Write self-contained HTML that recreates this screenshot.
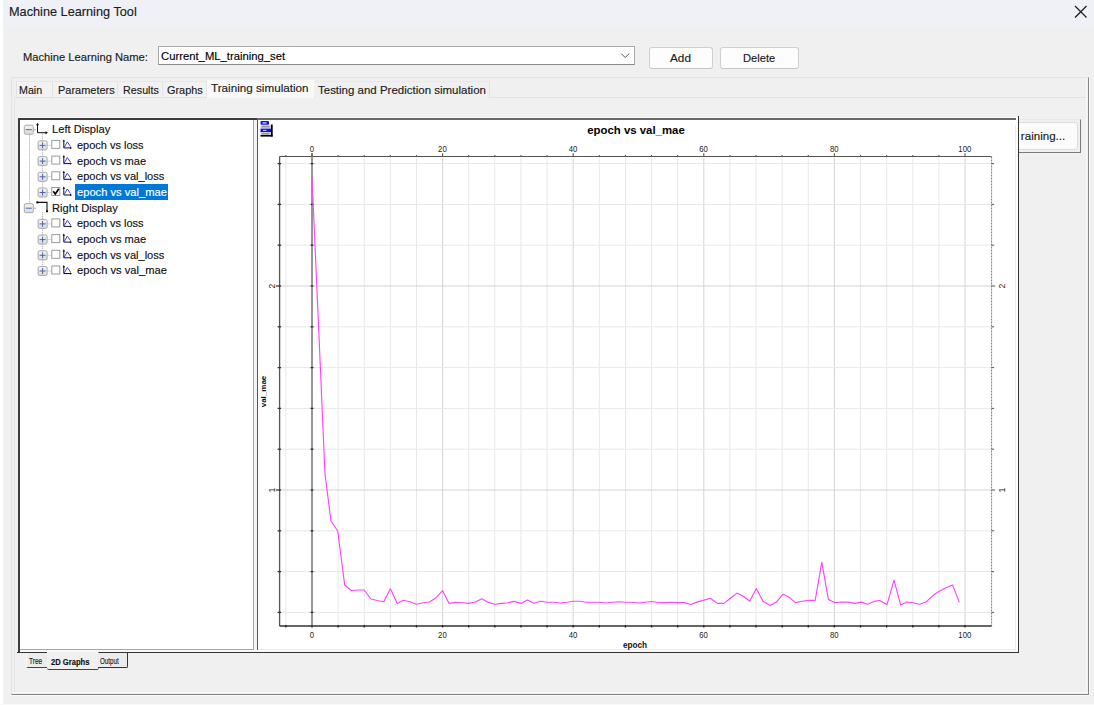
<!DOCTYPE html>
<html><head><meta charset="utf-8"><title>Machine Learning Tool</title>
<style>
html,body{margin:0;padding:0;}
body{width:1094px;height:705px;position:relative;overflow:hidden;background:#f0f0f0;font-family:"Liberation Sans", sans-serif;}
span{-webkit-text-stroke:0.15px currentColor;}
</style></head><body>
<div style="position:absolute;left:0;top:0;width:1094px;height:27px;background:#f0f1f6"></div>
<div style="position:absolute;left:0;top:0;width:3px;height:705px;background:#ffffff"></div>
<span style="position:absolute;left:8.50px;top:5.68px;font-size:12.9px;line-height:12.9px;color:#1b1b1b;font-weight:normal;white-space:nowrap;transform:scaleX(0.9864);transform-origin:0 0;">Machine Learning Tool</span>
<svg style="position:absolute;left:1073px;top:4px" width="16" height="16" viewBox="0 0 16 16"><path d="M2 2 L13.5 13.5 M13.5 2 L2 13.5" stroke="#1f1f1f" stroke-width="1.3" fill="none"/></svg>
<span style="position:absolute;left:23.00px;top:50.80px;font-size:11.7px;line-height:11.7px;color:#1a1a1a;font-weight:normal;white-space:nowrap;transform:scaleX(0.9562);transform-origin:0 0;">Machine Learning Name:</span>
<div style="position:absolute;left:158px;top:46px;width:475px;height:17px;background:#fff;border:1px solid #a9a9a9;border-bottom-color:#8a8a8a"></div>
<span style="position:absolute;left:161.00px;top:49.90px;font-size:11.7px;line-height:11.7px;color:#000;font-weight:normal;white-space:nowrap;transform:scaleX(0.9653);transform-origin:0 0;">Current_ML_training_set</span>
<svg style="position:absolute;left:620px;top:52px" width="11" height="7" viewBox="0 0 11 7"><path d="M1.3 1.6 L5.2 5.6 L9.1 1.6" stroke="#555" stroke-width="1" fill="none"/></svg>
<div style="position:absolute;left:649px;top:47px;width:62px;height:20px;background:#fdfdfd;border:1px solid #d0d0d0;border-bottom-color:#c4c4c4;border-radius:3px"></div>
<span style="position:absolute;left:670.30px;top:52.20px;font-size:11.7px;line-height:11.7px;color:#1a1a1a;font-weight:normal;white-space:nowrap;transform:scaleX(1.0087);transform-origin:0 0;">Add</span>
<div style="position:absolute;left:720px;top:47px;width:77px;height:20px;background:#fdfdfd;border:1px solid #d0d0d0;border-bottom-color:#c4c4c4;border-radius:3px"></div>
<span style="position:absolute;left:742.60px;top:52.20px;font-size:11.7px;line-height:11.7px;color:#1a1a1a;font-weight:normal;white-space:nowrap;transform:scaleX(0.9521);transform-origin:0 0;">Delete</span>
<div style="position:absolute;left:11px;top:77px;width:1078.1px;height:618px;box-sizing:border-box;border-left:1px solid #e2e2e2;border-top:1px solid #e2e2e2;border-right:1.8px solid #858585;border-bottom:1.8px solid #858585"></div>
<div style="position:absolute;left:1086.3px;top:78px;width:1px;height:615px;background:#f8f8f8"></div>
<div style="position:absolute;left:1089.1px;top:77px;width:1px;height:619px;background:#f8f8f8"></div>
<div style="position:absolute;left:12px;top:692.2px;width:1075px;height:1px;background:#f8f8f8"></div>
<div style="position:absolute;left:11px;top:695px;width:1079px;height:1px;background:#f8f8f8"></div>
<div style="position:absolute;left:0;top:704px;width:1094px;height:1px;background:#f9f9f9"></div>
<div style="position:absolute;left:14px;top:97px;width:1072px;height:1px;background:#e2e2e2"></div>
<div style="position:absolute;left:14px;top:97px;width:1px;height:595px;background:#e6e6e6"></div>
<div style="position:absolute;left:16px;top:81px;width:37.3px;height:16px;background:#f2f2f2;border-right:1px solid #e3e3e3;border-top:1px solid #e6e6e6;border-left:1px solid #e3e3e3;box-sizing:border-box"></div>
<span style="position:absolute;left:19.40px;top:83.80px;font-size:11.7px;line-height:11.7px;color:#1a1a1a;font-weight:normal;white-space:nowrap;transform:scaleX(0.9148);transform-origin:0 0;">Main</span>
<div style="position:absolute;left:54px;top:81px;width:64.4px;height:16px;background:#f2f2f2;border-right:1px solid #e3e3e3;border-top:1px solid #e6e6e6;box-sizing:border-box"></div>
<span style="position:absolute;left:57.80px;top:83.80px;font-size:11.7px;line-height:11.7px;color:#1a1a1a;font-weight:normal;white-space:nowrap;transform:scaleX(0.9393);transform-origin:0 0;">Parameters</span>
<div style="position:absolute;left:119px;top:81px;width:43.8px;height:16px;background:#f2f2f2;border-right:1px solid #e3e3e3;border-top:1px solid #e6e6e6;box-sizing:border-box"></div>
<span style="position:absolute;left:122.90px;top:83.80px;font-size:11.7px;line-height:11.7px;color:#1a1a1a;font-weight:normal;white-space:nowrap;transform:scaleX(0.9202);transform-origin:0 0;">Results</span>
<div style="position:absolute;left:163.5px;top:81px;width:43.1px;height:16px;background:#f2f2f2;border-right:1px solid #e3e3e3;border-top:1px solid #e6e6e6;box-sizing:border-box"></div>
<span style="position:absolute;left:167.20px;top:83.80px;font-size:11.7px;line-height:11.7px;color:#1a1a1a;font-weight:normal;white-space:nowrap;transform:scaleX(0.9331);transform-origin:0 0;">Graphs</span>
<div style="position:absolute;left:207px;top:80px;width:107px;height:18px;background:#f9f9f9"></div>
<span style="position:absolute;left:211.30px;top:82.10px;font-size:11.7px;line-height:11.7px;color:#1a1a1a;font-weight:normal;white-space:nowrap;transform:scaleX(0.9994);transform-origin:0 0;">Training simulation</span>
<div style="position:absolute;left:314.5px;top:81px;width:174px;height:16px;background:#f0f0f0;border-top:1px solid #e8e8e8;border-right:1px solid #e3e3e3"></div>
<span style="position:absolute;left:318.30px;top:83.80px;font-size:11.7px;line-height:11.7px;color:#1a1a1a;font-weight:normal;white-space:nowrap;transform:scaleX(0.9828);transform-origin:0 0;">Testing and Prediction simulation</span>
<div style="position:absolute;left:960px;top:119px;width:121.2px;height:33.9px;border-right:1.4px solid #7a7a7a;border-bottom:1.4px solid #7a7a7a;border-top:1px solid #e8e8e8;box-sizing:border-box"></div>
<div style="position:absolute;left:960px;top:121.5px;width:117.5px;height:28px;background:#fbfbfb;border:1px solid #dcdcdc;border-radius:3px;box-sizing:border-box"></div>
<div style="position:absolute;left:1021.2px;top:120px;width:55px;height:30px;overflow:hidden"><div style="position:absolute;left:-1021.2px;top:-120px;width:1094px;height:705px"><span style="position:absolute;left:990.10px;top:130.20px;font-size:11.7px;line-height:11.7px;color:#1a1a1a;font-weight:normal;white-space:nowrap;transform:scaleX(0.9900);transform-origin:0 0;">Start training...</span></div></div>
<div style="position:absolute;left:18px;top:117px;width:1002px;height:1px;background:#fafafa"></div>
<div style="position:absolute;left:18px;top:118px;width:1001px;height:535px;background:#fff"></div>
<div style="position:absolute;left:18px;top:118px;width:239px;height:1.9px;background:#3c3c3c"></div>
<div style="position:absolute;left:257px;top:118px;width:758.6px;height:1.9px;background:#686868"></div>
<div style="position:absolute;left:18px;top:118px;width:2px;height:535px;background:#3c3c3c"></div>
<div style="position:absolute;left:1017.6px;top:116.3px;width:1.7px;height:536.7px;background:#333"></div>
<div style="position:absolute;left:18px;top:651.5px;width:1001.3px;height:1.5px;background:#333"></div>
<div style="position:absolute;left:253px;top:120px;width:1px;height:530px;background:#9ea6b2"></div>
<div style="position:absolute;left:20px;top:649px;width:234px;height:1px;background:#9ea6b2"></div>
<div style="position:absolute;left:254px;top:120px;width:3px;height:530px;background:#f4f4f4"></div>
<div style="position:absolute;left:257px;top:120px;width:1px;height:530px;background:#555"></div>
<div style="position:absolute;left:1015px;top:125px;width:1px;height:525px;background:#ececec"></div>
<div style="position:absolute;left:258px;top:649px;width:758px;height:1px;background:#ececec"></div>
<div style="position:absolute;left:20px;top:650px;width:998px;height:2px;background:#f8f8f8"></div>
<span style="position:absolute;left:52.00px;top:124.15px;font-size:11.4px;line-height:11.4px;color:#111;font-weight:normal;white-space:nowrap;transform:scaleX(0.9788);transform-origin:0 0;">Left Display</span>
<span style="position:absolute;left:77.00px;top:139.85px;font-size:11.4px;line-height:11.4px;color:#111;font-weight:normal;white-space:nowrap;transform:scaleX(0.9643);transform-origin:0 0;">epoch vs loss</span>
<span style="position:absolute;left:77.00px;top:155.55px;font-size:11.4px;line-height:11.4px;color:#111;font-weight:normal;white-space:nowrap;transform:scaleX(0.9750);transform-origin:0 0;">epoch vs mae</span>
<span style="position:absolute;left:77.00px;top:171.25px;font-size:11.4px;line-height:11.4px;color:#111;font-weight:normal;white-space:nowrap;transform:scaleX(0.9713);transform-origin:0 0;">epoch vs val_loss</span>
<div style="position:absolute;left:75.2px;top:184px;width:92.8px;height:15.5px;background:#0078d7"></div>
<span style="position:absolute;left:77.00px;top:186.95px;font-size:11.4px;line-height:11.4px;color:#fff;font-weight:normal;white-space:nowrap;transform:scaleX(0.9795);transform-origin:0 0;">epoch vs val_mae</span>
<span style="position:absolute;left:52.00px;top:202.65px;font-size:11.4px;line-height:11.4px;color:#111;font-weight:normal;white-space:nowrap;transform:scaleX(0.9812);transform-origin:0 0;">Right Display</span>
<span style="position:absolute;left:77.00px;top:218.35px;font-size:11.4px;line-height:11.4px;color:#111;font-weight:normal;white-space:nowrap;transform:scaleX(0.9643);transform-origin:0 0;">epoch vs loss</span>
<span style="position:absolute;left:77.00px;top:234.05px;font-size:11.4px;line-height:11.4px;color:#111;font-weight:normal;white-space:nowrap;transform:scaleX(0.9750);transform-origin:0 0;">epoch vs mae</span>
<span style="position:absolute;left:77.00px;top:249.75px;font-size:11.4px;line-height:11.4px;color:#111;font-weight:normal;white-space:nowrap;transform:scaleX(0.9713);transform-origin:0 0;">epoch vs val_loss</span>
<span style="position:absolute;left:77.00px;top:265.45px;font-size:11.4px;line-height:11.4px;color:#111;font-weight:normal;white-space:nowrap;transform:scaleX(0.9795);transform-origin:0 0;">epoch vs val_mae</span>
<svg style="position:absolute;left:0;top:0" width="260" height="300" viewBox="0 0 260 300">
<line x1="29.5" y1="134.7" x2="29.5" y2="203.7" stroke="#a8a8a8" stroke-width="1" stroke-dasharray="1 1"/>
<line x1="42.5" y1="133.7" x2="42.5" y2="188.0" stroke="#a8a8a8" stroke-width="1" stroke-dasharray="1 1"/>
<line x1="34" y1="129.7" x2="36" y2="129.7" stroke="#a8a8a8" stroke-width="1"/>
<line x1="42.5" y1="212.2" x2="42.5" y2="266.5" stroke="#a8a8a8" stroke-width="1" stroke-dasharray="1 1"/>
<line x1="34" y1="208.2" x2="36" y2="208.2" stroke="#a8a8a8" stroke-width="1"/>
<defs><linearGradient id="bx" x1="0" y1="0" x2="0" y2="1"><stop offset="0" stop-color="#f4f4f4"/><stop offset="1" stop-color="#dcdcdc"/></linearGradient></defs>
<rect x="24.3" y="125.2" width="9" height="9" rx="1.5" fill="url(#bx)" stroke="#a9a9a9" stroke-width="1"/><line x1="25.8" y1="129.7" x2="31.8" y2="129.7" stroke="#4a64a8" stroke-width="1"/>
<path d="M37.5 123.7 V132.7 H47" stroke="#111" stroke-width="1" fill="none"/>
<path d="M36 125.2 L37.5 122.7 L39 125.2 Z" fill="#111"/>
<path d="M45.5 131.2 L48 132.7 L45.5 134.2 Z" fill="#111"/>
<rect x="38.1" y="140.9" width="9" height="9" rx="1.5" fill="url(#bx)" stroke="#a9a9a9" stroke-width="1"/><line x1="39.6" y1="145.4" x2="45.6" y2="145.4" stroke="#4a64a8" stroke-width="1"/><line x1="42.6" y1="142.4" x2="42.6" y2="148.4" stroke="#4a64a8" stroke-width="1"/>
<line x1="47.5" y1="145.4" x2="50.5" y2="145.4" stroke="#b0b0b0" stroke-width="1" stroke-dasharray="1 1"/>
<rect x="51.8" y="140.4" width="8" height="8" fill="#fff" stroke="#9c9c9c" stroke-width="1"/>
<path d="M63.8 140.4 V147.9 H71" stroke="#111" stroke-width="1" fill="none"/>
<path d="M62.6 141.6 L63.8 139.4 L65 141.6 Z" fill="#111"/>
<path d="M70 146.7 L72 147.9 L70 149.1 Z" fill="#111"/>
<path d="M64.3 147.2 L67.3 141.9 L70.5 146.4" stroke="#3a3ae8" stroke-width="1" fill="none"/>
<rect x="38.1" y="156.6" width="9" height="9" rx="1.5" fill="url(#bx)" stroke="#a9a9a9" stroke-width="1"/><line x1="39.6" y1="161.1" x2="45.6" y2="161.1" stroke="#4a64a8" stroke-width="1"/><line x1="42.6" y1="158.1" x2="42.6" y2="164.1" stroke="#4a64a8" stroke-width="1"/>
<line x1="47.5" y1="161.1" x2="50.5" y2="161.1" stroke="#b0b0b0" stroke-width="1" stroke-dasharray="1 1"/>
<rect x="51.8" y="156.1" width="8" height="8" fill="#fff" stroke="#9c9c9c" stroke-width="1"/>
<path d="M63.8 156.1 V163.6 H71" stroke="#111" stroke-width="1" fill="none"/>
<path d="M62.6 157.3 L63.8 155.1 L65 157.3 Z" fill="#111"/>
<path d="M70 162.4 L72 163.6 L70 164.8 Z" fill="#111"/>
<path d="M64.3 162.9 L67.3 157.6 L70.5 162.1" stroke="#3a3ae8" stroke-width="1" fill="none"/>
<rect x="38.1" y="172.3" width="9" height="9" rx="1.5" fill="url(#bx)" stroke="#a9a9a9" stroke-width="1"/><line x1="39.6" y1="176.8" x2="45.6" y2="176.8" stroke="#4a64a8" stroke-width="1"/><line x1="42.6" y1="173.8" x2="42.6" y2="179.8" stroke="#4a64a8" stroke-width="1"/>
<line x1="47.5" y1="176.8" x2="50.5" y2="176.8" stroke="#b0b0b0" stroke-width="1" stroke-dasharray="1 1"/>
<rect x="51.8" y="171.8" width="8" height="8" fill="#fff" stroke="#9c9c9c" stroke-width="1"/>
<path d="M63.8 171.8 V179.3 H71" stroke="#111" stroke-width="1" fill="none"/>
<path d="M62.6 173.0 L63.8 170.8 L65 173.0 Z" fill="#111"/>
<path d="M70 178.1 L72 179.3 L70 180.5 Z" fill="#111"/>
<path d="M64.3 178.6 L67.3 173.3 L70.5 177.8" stroke="#3a3ae8" stroke-width="1" fill="none"/>
<rect x="38.1" y="188.0" width="9" height="9" rx="1.5" fill="url(#bx)" stroke="#a9a9a9" stroke-width="1"/><line x1="39.6" y1="192.5" x2="45.6" y2="192.5" stroke="#4a64a8" stroke-width="1"/><line x1="42.6" y1="189.5" x2="42.6" y2="195.5" stroke="#4a64a8" stroke-width="1"/>
<line x1="47.5" y1="192.5" x2="50.5" y2="192.5" stroke="#b0b0b0" stroke-width="1" stroke-dasharray="1 1"/>
<rect x="51.8" y="187.5" width="8" height="8" fill="#fff" stroke="#9c9c9c" stroke-width="1"/>
<path d="M53.3 191.3 L55.3 194.0 L58.8 188.7" stroke="#000" stroke-width="1.6" fill="none"/>
<path d="M63.8 187.5 V195.0 H71" stroke="#111" stroke-width="1" fill="none"/>
<path d="M62.6 188.7 L63.8 186.5 L65 188.7 Z" fill="#111"/>
<path d="M70 193.8 L72 195.0 L70 196.2 Z" fill="#111"/>
<path d="M64.3 194.3 L67.3 189.0 L70.5 193.5" stroke="#3a3ae8" stroke-width="1" fill="none"/>
<rect x="24.3" y="203.7" width="9" height="9" rx="1.5" fill="url(#bx)" stroke="#a9a9a9" stroke-width="1"/><line x1="25.8" y1="208.2" x2="31.8" y2="208.2" stroke="#4a64a8" stroke-width="1"/>
<path d="M37.5 202.4 H47 V211.2" stroke="#111" stroke-width="1.1" fill="none"/>
<rect x="36.3" y="201.4" width="2" height="2" fill="#000"/>
<rect x="46" y="210.4" width="2" height="1.8" fill="#000"/>
<rect x="38.1" y="219.4" width="9" height="9" rx="1.5" fill="url(#bx)" stroke="#a9a9a9" stroke-width="1"/><line x1="39.6" y1="223.9" x2="45.6" y2="223.9" stroke="#4a64a8" stroke-width="1"/><line x1="42.6" y1="220.9" x2="42.6" y2="226.9" stroke="#4a64a8" stroke-width="1"/>
<line x1="47.5" y1="223.9" x2="50.5" y2="223.9" stroke="#b0b0b0" stroke-width="1" stroke-dasharray="1 1"/>
<rect x="51.8" y="218.9" width="8" height="8" fill="#fff" stroke="#9c9c9c" stroke-width="1"/>
<path d="M63.8 218.9 V226.4 H71" stroke="#111" stroke-width="1" fill="none"/>
<path d="M62.6 220.1 L63.8 217.9 L65 220.1 Z" fill="#111"/>
<path d="M70 225.2 L72 226.4 L70 227.6 Z" fill="#111"/>
<path d="M64.3 225.7 L67.3 220.4 L70.5 224.9" stroke="#3a3ae8" stroke-width="1" fill="none"/>
<rect x="38.1" y="235.1" width="9" height="9" rx="1.5" fill="url(#bx)" stroke="#a9a9a9" stroke-width="1"/><line x1="39.6" y1="239.6" x2="45.6" y2="239.6" stroke="#4a64a8" stroke-width="1"/><line x1="42.6" y1="236.6" x2="42.6" y2="242.6" stroke="#4a64a8" stroke-width="1"/>
<line x1="47.5" y1="239.6" x2="50.5" y2="239.6" stroke="#b0b0b0" stroke-width="1" stroke-dasharray="1 1"/>
<rect x="51.8" y="234.6" width="8" height="8" fill="#fff" stroke="#9c9c9c" stroke-width="1"/>
<path d="M63.8 234.6 V242.1 H71" stroke="#111" stroke-width="1" fill="none"/>
<path d="M62.6 235.8 L63.8 233.6 L65 235.8 Z" fill="#111"/>
<path d="M70 240.9 L72 242.1 L70 243.3 Z" fill="#111"/>
<path d="M64.3 241.4 L67.3 236.1 L70.5 240.6" stroke="#3a3ae8" stroke-width="1" fill="none"/>
<rect x="38.1" y="250.8" width="9" height="9" rx="1.5" fill="url(#bx)" stroke="#a9a9a9" stroke-width="1"/><line x1="39.6" y1="255.3" x2="45.6" y2="255.3" stroke="#4a64a8" stroke-width="1"/><line x1="42.6" y1="252.3" x2="42.6" y2="258.3" stroke="#4a64a8" stroke-width="1"/>
<line x1="47.5" y1="255.3" x2="50.5" y2="255.3" stroke="#b0b0b0" stroke-width="1" stroke-dasharray="1 1"/>
<rect x="51.8" y="250.3" width="8" height="8" fill="#fff" stroke="#9c9c9c" stroke-width="1"/>
<path d="M63.8 250.3 V257.8 H71" stroke="#111" stroke-width="1" fill="none"/>
<path d="M62.6 251.5 L63.8 249.3 L65 251.5 Z" fill="#111"/>
<path d="M70 256.6 L72 257.8 L70 259.0 Z" fill="#111"/>
<path d="M64.3 257.1 L67.3 251.8 L70.5 256.3" stroke="#3a3ae8" stroke-width="1" fill="none"/>
<rect x="38.1" y="266.5" width="9" height="9" rx="1.5" fill="url(#bx)" stroke="#a9a9a9" stroke-width="1"/><line x1="39.6" y1="271.0" x2="45.6" y2="271.0" stroke="#4a64a8" stroke-width="1"/><line x1="42.6" y1="268.0" x2="42.6" y2="274.0" stroke="#4a64a8" stroke-width="1"/>
<line x1="47.5" y1="271.0" x2="50.5" y2="271.0" stroke="#b0b0b0" stroke-width="1" stroke-dasharray="1 1"/>
<rect x="51.8" y="266.0" width="8" height="8" fill="#fff" stroke="#9c9c9c" stroke-width="1"/>
<path d="M63.8 266.0 V273.5 H71" stroke="#111" stroke-width="1" fill="none"/>
<path d="M62.6 267.2 L63.8 265.0 L65 267.2 Z" fill="#111"/>
<path d="M70 272.3 L72 273.5 L70 274.7 Z" fill="#111"/>
<path d="M64.3 272.8 L67.3 267.5 L70.5 272.0" stroke="#3a3ae8" stroke-width="1" fill="none"/>
</svg>
<div style="position:absolute;left:17px;top:651.6px;width:1002px;height:1.4px;background:#333"></div>
<div style="position:absolute;left:25.5px;top:653px;width:21px;height:14px;background:#ececec;border-bottom:1.5px solid #444;border-left:1px solid #f8f8f8;border-radius:0 0 0 2px"></div>
<span style="position:absolute;left:29.20px;top:656.92px;font-size:8.6px;line-height:8.6px;color:#222;font-weight:normal;white-space:nowrap;transform:scaleX(0.7602);transform-origin:0 0;">Tree</span>
<div style="position:absolute;left:47px;top:652px;width:50.5px;height:16.5px;background:#f0f0f0;border-bottom:1.8px solid #444;border-right:1px solid #888;border-radius:0 0 2px 2px"></div>
<span style="position:absolute;left:51.40px;top:657.75px;font-size:8.8px;line-height:8.8px;color:#111;font-weight:bold;white-space:nowrap;transform:scaleX(0.8629);transform-origin:0 0;">2D Graphs</span>
<div style="position:absolute;left:98px;top:653px;width:28.5px;height:13.5px;background:#ececec;border-bottom:1.5px solid #333;border-right:1.5px solid #333;border-radius:0 0 2px 0"></div>
<span style="position:absolute;left:100.20px;top:656.92px;font-size:8.6px;line-height:8.6px;color:#222;font-weight:normal;white-space:nowrap;transform:scaleX(0.7243);transform-origin:0 0;">Output</span>
<svg style="position:absolute;left:0;top:0" width="1094" height="705" viewBox="0 0 1094 705">
<g><rect x="260.5" y="121" width="8.5" height="3.8" rx="1" fill="#1010e0"/><rect x="262.5" y="122.2" width="4" height="1.4" fill="#c8c8ff"/><rect x="271" y="124.5" width="1.7" height="12" fill="#000"/><rect x="260.5" y="135" width="12.2" height="1.6" fill="#000"/><rect x="260.5" y="125.3" width="10.5" height="2.9" fill="#c8c8c0"/><rect x="262" y="126.3" width="7.5" height="0.9" fill="#808080"/><rect x="260.5" y="128.6" width="10.5" height="3.6" fill="#1010e0"/><rect x="263" y="129.9" width="3.5" height="1" fill="#d8d8ff"/><rect x="260.5" y="132.4" width="10.5" height="2.6" fill="#c8c8c0"/><rect x="262" y="133.3" width="7.5" height="0.9" fill="#808080"/></g>
<text x="636" y="133.6" font-family="Liberation Sans" font-size="11.4" font-weight="bold" text-anchor="middle" fill="#000">epoch vs val_mae</text>
<line x1="285.88" y1="157.5" x2="285.88" y2="626.0" stroke="#e8e8e8" stroke-width="1"/>
<line x1="338.12" y1="157.5" x2="338.12" y2="626.0" stroke="#e8e8e8" stroke-width="1"/>
<line x1="364.24" y1="157.5" x2="364.24" y2="626.0" stroke="#e8e8e8" stroke-width="1"/>
<line x1="390.36" y1="157.5" x2="390.36" y2="626.0" stroke="#e8e8e8" stroke-width="1"/>
<line x1="416.48" y1="157.5" x2="416.48" y2="626.0" stroke="#e8e8e8" stroke-width="1"/>
<line x1="442.60" y1="157.5" x2="442.60" y2="626.0" stroke="#d4d4d4" stroke-width="1"/>
<line x1="468.72" y1="157.5" x2="468.72" y2="626.0" stroke="#e8e8e8" stroke-width="1"/>
<line x1="494.84" y1="157.5" x2="494.84" y2="626.0" stroke="#e8e8e8" stroke-width="1"/>
<line x1="520.96" y1="157.5" x2="520.96" y2="626.0" stroke="#e8e8e8" stroke-width="1"/>
<line x1="547.08" y1="157.5" x2="547.08" y2="626.0" stroke="#e8e8e8" stroke-width="1"/>
<line x1="573.20" y1="157.5" x2="573.20" y2="626.0" stroke="#d4d4d4" stroke-width="1"/>
<line x1="599.32" y1="157.5" x2="599.32" y2="626.0" stroke="#e8e8e8" stroke-width="1"/>
<line x1="625.44" y1="157.5" x2="625.44" y2="626.0" stroke="#e8e8e8" stroke-width="1"/>
<line x1="651.56" y1="157.5" x2="651.56" y2="626.0" stroke="#e8e8e8" stroke-width="1"/>
<line x1="677.68" y1="157.5" x2="677.68" y2="626.0" stroke="#e8e8e8" stroke-width="1"/>
<line x1="703.80" y1="157.5" x2="703.80" y2="626.0" stroke="#d4d4d4" stroke-width="1"/>
<line x1="729.92" y1="157.5" x2="729.92" y2="626.0" stroke="#e8e8e8" stroke-width="1"/>
<line x1="756.04" y1="157.5" x2="756.04" y2="626.0" stroke="#e8e8e8" stroke-width="1"/>
<line x1="782.16" y1="157.5" x2="782.16" y2="626.0" stroke="#e8e8e8" stroke-width="1"/>
<line x1="808.28" y1="157.5" x2="808.28" y2="626.0" stroke="#e8e8e8" stroke-width="1"/>
<line x1="834.40" y1="157.5" x2="834.40" y2="626.0" stroke="#d4d4d4" stroke-width="1"/>
<line x1="860.52" y1="157.5" x2="860.52" y2="626.0" stroke="#e8e8e8" stroke-width="1"/>
<line x1="886.64" y1="157.5" x2="886.64" y2="626.0" stroke="#e8e8e8" stroke-width="1"/>
<line x1="912.76" y1="157.5" x2="912.76" y2="626.0" stroke="#e8e8e8" stroke-width="1"/>
<line x1="938.88" y1="157.5" x2="938.88" y2="626.0" stroke="#e8e8e8" stroke-width="1"/>
<line x1="965.00" y1="157.5" x2="965.00" y2="626.0" stroke="#d4d4d4" stroke-width="1"/>
<line x1="279.6" y1="612.40" x2="991.6" y2="612.40" stroke="#e8e8e8" stroke-width="1"/>
<line x1="279.6" y1="571.60" x2="991.6" y2="571.60" stroke="#e8e8e8" stroke-width="1"/>
<line x1="279.6" y1="530.80" x2="991.6" y2="530.80" stroke="#e8e8e8" stroke-width="1"/>
<line x1="279.6" y1="490.00" x2="991.6" y2="490.00" stroke="#d4d4d4" stroke-width="1"/>
<line x1="279.6" y1="449.20" x2="991.6" y2="449.20" stroke="#e8e8e8" stroke-width="1"/>
<line x1="279.6" y1="408.40" x2="991.6" y2="408.40" stroke="#e8e8e8" stroke-width="1"/>
<line x1="279.6" y1="367.60" x2="991.6" y2="367.60" stroke="#e8e8e8" stroke-width="1"/>
<line x1="279.6" y1="326.80" x2="991.6" y2="326.80" stroke="#e8e8e8" stroke-width="1"/>
<line x1="279.6" y1="286.00" x2="991.6" y2="286.00" stroke="#d4d4d4" stroke-width="1"/>
<line x1="279.6" y1="245.20" x2="991.6" y2="245.20" stroke="#e8e8e8" stroke-width="1"/>
<line x1="279.6" y1="204.40" x2="991.6" y2="204.40" stroke="#e8e8e8" stroke-width="1"/>
<line x1="279.6" y1="163.60" x2="991.6" y2="163.60" stroke="#e8e8e8" stroke-width="1"/>
<line x1="279.6" y1="156.5" x2="991.6" y2="156.5" stroke="#555" stroke-width="1.2"/>
<line x1="279.6" y1="156.5" x2="279.6" y2="626.0" stroke="#555" stroke-width="1.3"/>
<line x1="991.6" y1="156.5" x2="991.6" y2="626.0" stroke="#7a7a7a" stroke-width="1" stroke-dasharray="2 1"/>
<line x1="279.6" y1="626.0" x2="991.6" y2="626.0" stroke="#333" stroke-width="1.4"/>
<line x1="312.00" y1="153" x2="312.00" y2="626.0" stroke="#7c7c7c" stroke-width="1.6"/>
<line x1="285.88" y1="155.1" x2="285.88" y2="156.5" stroke="#555" stroke-width="1.1"/>
<line x1="285.88" y1="625.0" x2="285.88" y2="627.5" stroke="#222" stroke-width="1.3"/>
<line x1="312.00" y1="153.3" x2="312.00" y2="156.5" stroke="#555" stroke-width="1.1"/>
<line x1="312.00" y1="625.0" x2="312.00" y2="627.5" stroke="#222" stroke-width="1.3"/>
<line x1="338.12" y1="155.1" x2="338.12" y2="156.5" stroke="#555" stroke-width="1.1"/>
<line x1="338.12" y1="625.0" x2="338.12" y2="627.5" stroke="#222" stroke-width="1.3"/>
<line x1="364.24" y1="155.1" x2="364.24" y2="156.5" stroke="#555" stroke-width="1.1"/>
<line x1="364.24" y1="625.0" x2="364.24" y2="627.5" stroke="#222" stroke-width="1.3"/>
<line x1="390.36" y1="155.1" x2="390.36" y2="156.5" stroke="#555" stroke-width="1.1"/>
<line x1="390.36" y1="625.0" x2="390.36" y2="627.5" stroke="#222" stroke-width="1.3"/>
<line x1="416.48" y1="155.1" x2="416.48" y2="156.5" stroke="#555" stroke-width="1.1"/>
<line x1="416.48" y1="625.0" x2="416.48" y2="627.5" stroke="#222" stroke-width="1.3"/>
<line x1="442.60" y1="153.3" x2="442.60" y2="156.5" stroke="#555" stroke-width="1.1"/>
<line x1="442.60" y1="625.0" x2="442.60" y2="627.5" stroke="#222" stroke-width="1.3"/>
<line x1="468.72" y1="155.1" x2="468.72" y2="156.5" stroke="#555" stroke-width="1.1"/>
<line x1="468.72" y1="625.0" x2="468.72" y2="627.5" stroke="#222" stroke-width="1.3"/>
<line x1="494.84" y1="155.1" x2="494.84" y2="156.5" stroke="#555" stroke-width="1.1"/>
<line x1="494.84" y1="625.0" x2="494.84" y2="627.5" stroke="#222" stroke-width="1.3"/>
<line x1="520.96" y1="155.1" x2="520.96" y2="156.5" stroke="#555" stroke-width="1.1"/>
<line x1="520.96" y1="625.0" x2="520.96" y2="627.5" stroke="#222" stroke-width="1.3"/>
<line x1="547.08" y1="155.1" x2="547.08" y2="156.5" stroke="#555" stroke-width="1.1"/>
<line x1="547.08" y1="625.0" x2="547.08" y2="627.5" stroke="#222" stroke-width="1.3"/>
<line x1="573.20" y1="153.3" x2="573.20" y2="156.5" stroke="#555" stroke-width="1.1"/>
<line x1="573.20" y1="625.0" x2="573.20" y2="627.5" stroke="#222" stroke-width="1.3"/>
<line x1="599.32" y1="155.1" x2="599.32" y2="156.5" stroke="#555" stroke-width="1.1"/>
<line x1="599.32" y1="625.0" x2="599.32" y2="627.5" stroke="#222" stroke-width="1.3"/>
<line x1="625.44" y1="155.1" x2="625.44" y2="156.5" stroke="#555" stroke-width="1.1"/>
<line x1="625.44" y1="625.0" x2="625.44" y2="627.5" stroke="#222" stroke-width="1.3"/>
<line x1="651.56" y1="155.1" x2="651.56" y2="156.5" stroke="#555" stroke-width="1.1"/>
<line x1="651.56" y1="625.0" x2="651.56" y2="627.5" stroke="#222" stroke-width="1.3"/>
<line x1="677.68" y1="155.1" x2="677.68" y2="156.5" stroke="#555" stroke-width="1.1"/>
<line x1="677.68" y1="625.0" x2="677.68" y2="627.5" stroke="#222" stroke-width="1.3"/>
<line x1="703.80" y1="153.3" x2="703.80" y2="156.5" stroke="#555" stroke-width="1.1"/>
<line x1="703.80" y1="625.0" x2="703.80" y2="627.5" stroke="#222" stroke-width="1.3"/>
<line x1="729.92" y1="155.1" x2="729.92" y2="156.5" stroke="#555" stroke-width="1.1"/>
<line x1="729.92" y1="625.0" x2="729.92" y2="627.5" stroke="#222" stroke-width="1.3"/>
<line x1="756.04" y1="155.1" x2="756.04" y2="156.5" stroke="#555" stroke-width="1.1"/>
<line x1="756.04" y1="625.0" x2="756.04" y2="627.5" stroke="#222" stroke-width="1.3"/>
<line x1="782.16" y1="155.1" x2="782.16" y2="156.5" stroke="#555" stroke-width="1.1"/>
<line x1="782.16" y1="625.0" x2="782.16" y2="627.5" stroke="#222" stroke-width="1.3"/>
<line x1="808.28" y1="155.1" x2="808.28" y2="156.5" stroke="#555" stroke-width="1.1"/>
<line x1="808.28" y1="625.0" x2="808.28" y2="627.5" stroke="#222" stroke-width="1.3"/>
<line x1="834.40" y1="153.3" x2="834.40" y2="156.5" stroke="#555" stroke-width="1.1"/>
<line x1="834.40" y1="625.0" x2="834.40" y2="627.5" stroke="#222" stroke-width="1.3"/>
<line x1="860.52" y1="155.1" x2="860.52" y2="156.5" stroke="#555" stroke-width="1.1"/>
<line x1="860.52" y1="625.0" x2="860.52" y2="627.5" stroke="#222" stroke-width="1.3"/>
<line x1="886.64" y1="155.1" x2="886.64" y2="156.5" stroke="#555" stroke-width="1.1"/>
<line x1="886.64" y1="625.0" x2="886.64" y2="627.5" stroke="#222" stroke-width="1.3"/>
<line x1="912.76" y1="155.1" x2="912.76" y2="156.5" stroke="#555" stroke-width="1.1"/>
<line x1="912.76" y1="625.0" x2="912.76" y2="627.5" stroke="#222" stroke-width="1.3"/>
<line x1="938.88" y1="155.1" x2="938.88" y2="156.5" stroke="#555" stroke-width="1.1"/>
<line x1="938.88" y1="625.0" x2="938.88" y2="627.5" stroke="#222" stroke-width="1.3"/>
<line x1="965.00" y1="153.3" x2="965.00" y2="156.5" stroke="#555" stroke-width="1.1"/>
<line x1="965.00" y1="625.0" x2="965.00" y2="627.5" stroke="#222" stroke-width="1.3"/>
<line x1="277.6" y1="612.40" x2="281.1" y2="612.40" stroke="#333" stroke-width="1.3"/>
<line x1="310.5" y1="612.40" x2="313.5" y2="612.40" stroke="#333" stroke-width="1.3"/>
<line x1="991.6" y1="612.40" x2="994.1" y2="612.40" stroke="#555" stroke-width="1"/>
<line x1="277.6" y1="571.60" x2="281.1" y2="571.60" stroke="#333" stroke-width="1.3"/>
<line x1="310.5" y1="571.60" x2="313.5" y2="571.60" stroke="#333" stroke-width="1.3"/>
<line x1="991.6" y1="571.60" x2="994.1" y2="571.60" stroke="#555" stroke-width="1"/>
<line x1="277.6" y1="530.80" x2="281.1" y2="530.80" stroke="#333" stroke-width="1.3"/>
<line x1="310.5" y1="530.80" x2="313.5" y2="530.80" stroke="#333" stroke-width="1.3"/>
<line x1="991.6" y1="530.80" x2="994.1" y2="530.80" stroke="#555" stroke-width="1"/>
<line x1="276.1" y1="490.00" x2="281.1" y2="490.00" stroke="#333" stroke-width="1.3"/>
<line x1="310.5" y1="490.00" x2="313.5" y2="490.00" stroke="#333" stroke-width="1.3"/>
<line x1="991.6" y1="490.00" x2="995.1" y2="490.00" stroke="#555" stroke-width="1"/>
<line x1="277.6" y1="449.20" x2="281.1" y2="449.20" stroke="#333" stroke-width="1.3"/>
<line x1="310.5" y1="449.20" x2="313.5" y2="449.20" stroke="#333" stroke-width="1.3"/>
<line x1="991.6" y1="449.20" x2="994.1" y2="449.20" stroke="#555" stroke-width="1"/>
<line x1="277.6" y1="408.40" x2="281.1" y2="408.40" stroke="#333" stroke-width="1.3"/>
<line x1="310.5" y1="408.40" x2="313.5" y2="408.40" stroke="#333" stroke-width="1.3"/>
<line x1="991.6" y1="408.40" x2="994.1" y2="408.40" stroke="#555" stroke-width="1"/>
<line x1="277.6" y1="367.60" x2="281.1" y2="367.60" stroke="#333" stroke-width="1.3"/>
<line x1="310.5" y1="367.60" x2="313.5" y2="367.60" stroke="#333" stroke-width="1.3"/>
<line x1="991.6" y1="367.60" x2="994.1" y2="367.60" stroke="#555" stroke-width="1"/>
<line x1="277.6" y1="326.80" x2="281.1" y2="326.80" stroke="#333" stroke-width="1.3"/>
<line x1="310.5" y1="326.80" x2="313.5" y2="326.80" stroke="#333" stroke-width="1.3"/>
<line x1="991.6" y1="326.80" x2="994.1" y2="326.80" stroke="#555" stroke-width="1"/>
<line x1="276.1" y1="286.00" x2="281.1" y2="286.00" stroke="#333" stroke-width="1.3"/>
<line x1="310.5" y1="286.00" x2="313.5" y2="286.00" stroke="#333" stroke-width="1.3"/>
<line x1="991.6" y1="286.00" x2="995.1" y2="286.00" stroke="#555" stroke-width="1"/>
<line x1="277.6" y1="245.20" x2="281.1" y2="245.20" stroke="#333" stroke-width="1.3"/>
<line x1="310.5" y1="245.20" x2="313.5" y2="245.20" stroke="#333" stroke-width="1.3"/>
<line x1="991.6" y1="245.20" x2="994.1" y2="245.20" stroke="#555" stroke-width="1"/>
<line x1="277.6" y1="204.40" x2="281.1" y2="204.40" stroke="#333" stroke-width="1.3"/>
<line x1="310.5" y1="204.40" x2="313.5" y2="204.40" stroke="#333" stroke-width="1.3"/>
<line x1="991.6" y1="204.40" x2="994.1" y2="204.40" stroke="#555" stroke-width="1"/>
<line x1="277.6" y1="163.60" x2="281.1" y2="163.60" stroke="#333" stroke-width="1.3"/>
<line x1="310.5" y1="163.60" x2="313.5" y2="163.60" stroke="#333" stroke-width="1.3"/>
<line x1="991.6" y1="163.60" x2="994.1" y2="163.60" stroke="#555" stroke-width="1"/>
<text x="309.65" y="152.0" font-family="Liberation Sans" font-size="8.6" textLength="4.30" lengthAdjust="spacingAndGlyphs" fill="#222">0</text>
<text x="309.65" y="638.3" font-family="Liberation Sans" font-size="8.6" textLength="4.30" lengthAdjust="spacingAndGlyphs" fill="#222">0</text>
<text x="438.10" y="152.0" font-family="Liberation Sans" font-size="8.6" textLength="8.61" lengthAdjust="spacingAndGlyphs" fill="#222">20</text>
<text x="438.10" y="638.3" font-family="Liberation Sans" font-size="8.6" textLength="8.61" lengthAdjust="spacingAndGlyphs" fill="#222">20</text>
<text x="568.70" y="152.0" font-family="Liberation Sans" font-size="8.6" textLength="8.61" lengthAdjust="spacingAndGlyphs" fill="#222">40</text>
<text x="568.70" y="638.3" font-family="Liberation Sans" font-size="8.6" textLength="8.61" lengthAdjust="spacingAndGlyphs" fill="#222">40</text>
<text x="699.30" y="152.0" font-family="Liberation Sans" font-size="8.6" textLength="8.61" lengthAdjust="spacingAndGlyphs" fill="#222">60</text>
<text x="699.30" y="638.3" font-family="Liberation Sans" font-size="8.6" textLength="8.61" lengthAdjust="spacingAndGlyphs" fill="#222">60</text>
<text x="829.90" y="152.0" font-family="Liberation Sans" font-size="8.6" textLength="8.61" lengthAdjust="spacingAndGlyphs" fill="#222">80</text>
<text x="829.90" y="638.3" font-family="Liberation Sans" font-size="8.6" textLength="8.61" lengthAdjust="spacingAndGlyphs" fill="#222">80</text>
<text x="958.34" y="152.0" font-family="Liberation Sans" font-size="8.6" textLength="12.91" lengthAdjust="spacingAndGlyphs" fill="#222">100</text>
<text x="958.34" y="638.3" font-family="Liberation Sans" font-size="8.6" textLength="12.91" lengthAdjust="spacingAndGlyphs" fill="#222">100</text>
<text transform="translate(275.3 490.0) rotate(-90)" x="0" y="0" font-family="Liberation Sans" font-size="8.6" text-anchor="middle" fill="#222">1</text>
<text transform="translate(1004.6 490.0) rotate(-90)" x="0" y="0" font-family="Liberation Sans" font-size="8.6" text-anchor="middle" fill="#222">1</text>
<text transform="translate(275.3 286.0) rotate(-90)" x="0" y="0" font-family="Liberation Sans" font-size="8.6" text-anchor="middle" fill="#222">2</text>
<text transform="translate(1004.6 286.0) rotate(-90)" x="0" y="0" font-family="Liberation Sans" font-size="8.6" text-anchor="middle" fill="#222">2</text>
<text x="635" y="648" font-family="Liberation Sans" font-size="8.2" font-weight="bold" text-anchor="middle" fill="#111">epoch</text>
<text transform="translate(266.3 391.5) rotate(-90)" x="0" y="0" font-family="Liberation Sans" font-size="8.0" font-weight="bold" text-anchor="middle" fill="#111">val_mae</text>
<path d="M312.0 177.0 L318.5 325.0 L325.0 474.0 L331.0 521.0 L337.7 531.0 L344.7 585.0 L351.2 590.5 L357.7 590.0 L364.2 590.0 L370.8 599.0 L377.3 600.5 L383.8 601.7 L390.4 588.8 L397.3 603.4 L403.4 600.2 L409.9 601.7 L416.5 604.2 L423.0 602.7 L429.5 602.0 L436.1 597.7 L442.6 590.7 L449.1 603.4 L455.7 602.4 L462.2 602.7 L468.7 603.4 L475.3 602.0 L481.8 598.7 L488.3 602.4 L494.8 604.2 L501.4 603.4 L507.9 602.7 L514.4 601.4 L521.0 603.4 L527.5 599.9 L534.0 603.3 L540.6 601.2 L547.1 602.2 L553.6 602.2 L560.1 603.0 L566.7 602.2 L573.2 601.2 L579.7 601.2 L586.3 602.2 L592.8 602.2 L599.3 602.2 L605.9 603.0 L612.4 602.2 L618.9 601.8 L625.4 602.2 L632.0 602.2 L638.5 603.0 L645.0 602.2 L651.6 601.5 L658.1 602.5 L664.6 602.6 L671.2 602.2 L677.7 602.6 L684.4 602.6 L691.0 604.5 L697.5 601.9 L704.1 600.1 L710.4 598.2 L717.3 603.4 L723.9 603.4 L730.4 598.2 L737.0 593.1 L743.6 596.5 L749.7 601.2 L756.3 588.5 L763.0 601.2 L770.2 605.6 L776.5 601.9 L783.1 594.2 L788.9 597.1 L795.5 602.6 L802.1 601.2 L808.7 600.4 L815.2 600.4 L821.8 562.4 L828.4 599.4 L834.7 602.6 L841.7 602.0 L848.3 602.1 L854.9 603.4 L861.4 602.1 L867.7 604.2 L873.9 601.4 L879.7 600.5 L887.0 604.6 L894.0 580.2 L900.6 604.9 L906.8 602.0 L913.3 602.7 L919.5 604.3 L926.0 602.0 L933.8 594.8 L938.9 591.4 L945.5 588.1 L952.5 584.9 L959.4 602.4" stroke="#ff44ff" stroke-width="1.15" fill="none" stroke-linejoin="round"/>
</svg>
</body></html>
